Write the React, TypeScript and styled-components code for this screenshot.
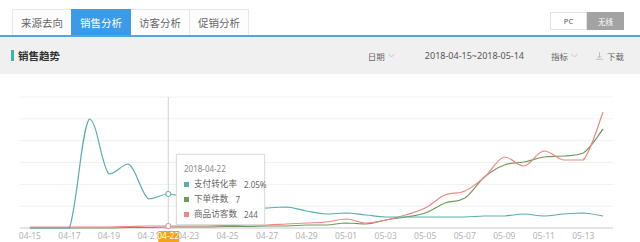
import React, { FC } from "react";
import styled, { createGlobalStyle } from "styled-components";

const GlobalStyle = createGlobalStyle`
  html, body {
    margin: 0;
    padding: 0;
    background: #fff;
  }
  body {
    font-family: "Noto Sans", "Noto Sans CJK SC", sans-serif;
  }
`;

const TEAL = "#5aaeaa";
const GREEN = "#6f9a5c";
const RED = "#f08686";

const Page = styled.div`
  width: 640px;
  height: 242px;
  overflow: hidden;
  background: #fff;
`;

const TopBar = styled.div`
  display: flex;
  justify-content: space-between;
  align-items: flex-end;
  height: 35px;
  padding: 0 16px 0 12px;
  border-bottom: 2px solid #4ea6e2;
`;

const Tabs = styled.div`
  display: flex;
`;

const Tab = styled.div<{ $active?: boolean }>`
  box-sizing: border-box;
  width: 60px;
  height: 26px;
  margin-right: -1px;
  display: flex;
  align-items: center;
  justify-content: center;
  font-size: 10.5px;
  color: ${(p) => (p.$active ? "#fff" : "#666")};
  background: ${(p) => (p.$active ? "#3d9be6" : "#fdfdfd")};
  border: 1px solid ${(p) => (p.$active ? "#3d9be6" : "#e8e8e8")};
  border-bottom: none;
  position: relative;
  z-index: ${(p) => (p.$active ? 1 : 0)};
`;

const Toggle = styled.div`
  align-self: flex-start;
  margin-top: 12px;
  display: flex;
  height: 18px;
`;

const ToggleItem = styled.div<{ $on?: boolean }>`
  box-sizing: border-box;
  width: 37px;
  display: flex;
  align-items: center;
  justify-content: center;
  font-size: 7.5px;
  color: ${(p) => (p.$on ? "#fff" : "#555")};
  background: ${(p) => (p.$on ? "#a3a3a3" : "#fff")};
  border: 1px solid ${(p) => (p.$on ? "#a3a3a3" : "#e2e2e2")};
`;

const HeaderBand = styled.div`
  height: 37px;
  background: #f0f0f0;
  display: flex;
  align-items: center;
  padding: 0 16px 0 11px;
`;

const Title = styled.div`
  display: flex;
  align-items: center;
  gap: 4px;
  font-size: 10.5px;
  font-weight: 700;
  color: #333;
`;

const TitleMark = styled.span`
  width: 3px;
  height: 11px;
  background: #3cb4a8;
`;

const Controls = styled.div`
  margin-left: auto;
  display: flex;
  align-items: center;
  font-size: 8.5px;
  color: #666;
`;

const Control = styled.div<{ $gap: number }>`
  display: flex;
  align-items: center;
  gap: 3px;
  margin-left: ${(p) => p.$gap}px;
`;

const Range = styled.div`
  font-size: 9px;
  color: #555;
  margin-left: 30px;
`;

const ChartBox = styled.div`
  position: relative;
  height: 168px;
`;

const Tip = styled.div`
  position: absolute;
  left: 176px;
  top: 80px;
  box-sizing: border-box;
  width: 89px;
  height: 71px;
  padding: 8px 0 0 7px;
  background: rgba(255, 255, 255, 0.96);
  border: 1px solid #dedede;
  box-shadow: 0 0 3px rgba(0, 0, 0, 0.08);
  font-size: 8px;
  line-height: 11px;
  color: #666;
  white-space: nowrap;
  display: flex;
  flex-direction: column;
  gap: 4px;
`;

const TipDate = styled.div`
  color: #888;
  margin-bottom: 1px;
`;

const TipRow = styled.div`
  display: flex;
  align-items: center;
  height: 11px;
`;

const Dot = styled.span<{ $color: string }>`
  flex: none;
  width: 5px;
  height: 5px;
  margin-right: 5px;
  background: ${(p) => p.$color};
`;

const TipLabel = styled.span`
  font-size: 8.6px;
`;

const TipValue = styled.span`
  margin-left: 7px;
`;

const Chevron: FC = () => (
  <svg width="7" height="5" viewBox="0 0 7 5">
    <polyline points="0.5,1 3.5,4 6.5,1" fill="none" stroke="#bbb" strokeWidth="0.8" />
  </svg>
);

const DownloadIcon: FC = () => (
  <svg width="9" height="9" viewBox="0 0 9 9">
    <line x1="4.5" y1="1" x2="4.5" y2="7" stroke="#bbb" strokeWidth="0.9" />
    <polyline points="2.5,5 4.5,7 6.5,5" fill="none" stroke="#bbb" strokeWidth="0.9" />
    <line x1="1" y1="8.3" x2="8" y2="8.3" stroke="#bbb" strokeWidth="0.9" />
  </svg>
);

// heights above the x axis, in px, one per day from 04-15 to 05-14
const payRate = [
  0, 0, 0, 109, 54, 64, 29, 34, 29, 24, 21, 18, 20, 21, 17, 14, 15, 13, 11, 11,
  11, 11, 11, 12, 12, 14, 12, 14, 15, 12,
];
const orders = [
  0, 0, 0, 0, 0, 0.5, 0.5, 1, 1, 1, 1.5, 1.5, 2, 2, 3, 3, 5, 4, 8, 11, 15, 25,
  30, 51, 63, 66, 71, 72, 75, 99,
];
const visitors = [
  1, 1, 1, 1, 1, 1.5, 2, 2, 2, 2, 2.5, 3, 3, 4, 5, 6, 9, 5, 8, 13, 20, 33, 37,
  51, 71, 62, 77, 68, 68, 116,
];

const LEFT = 20;
const RIGHT = 613;
const BASE = 154;
const STEP = (RIGHT - LEFT) / 30;
const xAt = (i: number) => LEFT + STEP * (i + 0.5);

const days = Array.from({ length: 30 }, (_, i) => {
  const d = new Date(2018, 3, 15 + i);
  const mm = String(d.getMonth() + 1).padStart(2, "0");
  const dd = String(d.getDate()).padStart(2, "0");
  return `${mm}-${dd}`;
});

// smoothed line, control points kept between neighbours so it never overshoots
const smoothPath = (values: number[]) => {
  const pts = values.map((v, i) => [xAt(i), BASE - v]);
  let d = `M${pts[0][0].toFixed(1)},${pts[0][1].toFixed(1)}`;
  for (let i = 0; i < pts.length - 1; i++) {
    const p0 = pts[i - 1] ?? pts[i];
    const p1 = pts[i];
    const p2 = pts[i + 1];
    const p3 = pts[i + 2] ?? p2;
    const lo = Math.min(p1[1], p2[1]);
    const hi = Math.max(p1[1], p2[1]);
    const clamp = (v: number) => Math.min(hi, Math.max(lo, v));
    const c1x = p1[0] + (p2[0] - p0[0]) * 0.2;
    const c1y = clamp(p1[1] + (p2[1] - p0[1]) * 0.2);
    const c2x = p2[0] - (p3[0] - p1[0]) * 0.2;
    const c2y = clamp(p2[1] - (p3[1] - p1[1]) * 0.2);
    d += ` C${c1x.toFixed(1)},${c1y.toFixed(1)} ${c2x.toFixed(1)},${c2y.toFixed(1)} ${p2[0].toFixed(1)},${p2[1].toFixed(1)}`;
  }
  return d;
};

const ACTIVE = 7;

const TrendChart: FC = () => {
  const grid = [1, 2, 3, 4, 5, 6].map((k) => BASE - k * 21.83);
  const ax = xAt(ACTIVE);
  return (
    <svg width="640" height="168" viewBox="0 0 640 168">
      {grid.map((y) => (
        <line key={y} x1={LEFT} x2={RIGHT} y1={y} y2={y} stroke="#f0f0f0" strokeWidth="1" />
      ))}
      <line x1={LEFT} x2={RIGHT} y1={BASE} y2={BASE} stroke="#c8c8c8" strokeWidth="1" />
      <line x1={ax} x2={ax} y1={grid[5]} y2={BASE} stroke="#d0d0d0" strokeWidth="1" />

      <path d={smoothPath(orders)} fill="none" stroke={GREEN} strokeWidth="1.2" />
      <path d={smoothPath(visitors)} fill="none" stroke={RED} strokeWidth="1.2" />
      <path d={smoothPath(payRate)} fill="none" stroke={TEAL} strokeWidth="1.2" />

      <circle cx={ax} cy={BASE - payRate[ACTIVE]} r="2.6" fill="#fff" stroke={TEAL} strokeWidth="1" />
      <circle cx={ax} cy={BASE - visitors[ACTIVE]} r="2.6" fill="#fff" stroke={RED} strokeWidth="1" />

      <rect x={ax - 10} y={157} width="21" height="12" fill="#f5a30f" />
      {days.map((label, i) =>
        i % 2 === 0 || i === ACTIVE || i === ACTIVE + 1 ? (
          <text
            key={label}
            x={xAt(i)}
            y={BASE + 11}
            textAnchor="middle"
            fontSize="8.5"
            fontFamily="'Noto Sans', sans-serif"
            fill={i === ACTIVE ? "#fff" : "#b3b3b3"}
          >
            {label}
          </text>
        ) : null
      )}
    </svg>
  );
};

const App: FC = () => {
  return (
    <>
      <GlobalStyle />
      <Page>
        <TopBar>
          <Tabs>
            <Tab>来源去向</Tab>
            <Tab $active>销售分析</Tab>
            <Tab>访客分析</Tab>
            <Tab>促销分析</Tab>
          </Tabs>
          <Toggle>
            <ToggleItem>PC</ToggleItem>
            <ToggleItem $on>无线</ToggleItem>
          </Toggle>
        </TopBar>

        <HeaderBand>
          <Title>
            <TitleMark />
            销售趋势
          </Title>
          <Controls>
            <Control $gap={0}>
              日期
              <Chevron />
            </Control>
            <Range>2018-04-15~2018-05-14</Range>
            <Control $gap={27}>
              指标
              <Chevron />
            </Control>
            <Control $gap={17}>
              <DownloadIcon />
              下载
            </Control>
          </Controls>
        </HeaderBand>

        <ChartBox>
          <TrendChart />
          <Tip>
            <TipDate>2018-04-22</TipDate>
            <TipRow>
              <Dot $color={TEAL} />
              <TipLabel>支付转化率</TipLabel>
              <TipValue>2.05%</TipValue>
            </TipRow>
            <TipRow>
              <Dot $color={GREEN} />
              <TipLabel>下单件数</TipLabel>
              <TipValue>7</TipValue>
            </TipRow>
            <TipRow>
              <Dot $color={RED} />
              <TipLabel>商品访客数</TipLabel>
              <TipValue>244</TipValue>
            </TipRow>
          </Tip>
        </ChartBox>
      </Page>
    </>
  );
};

export default App;
